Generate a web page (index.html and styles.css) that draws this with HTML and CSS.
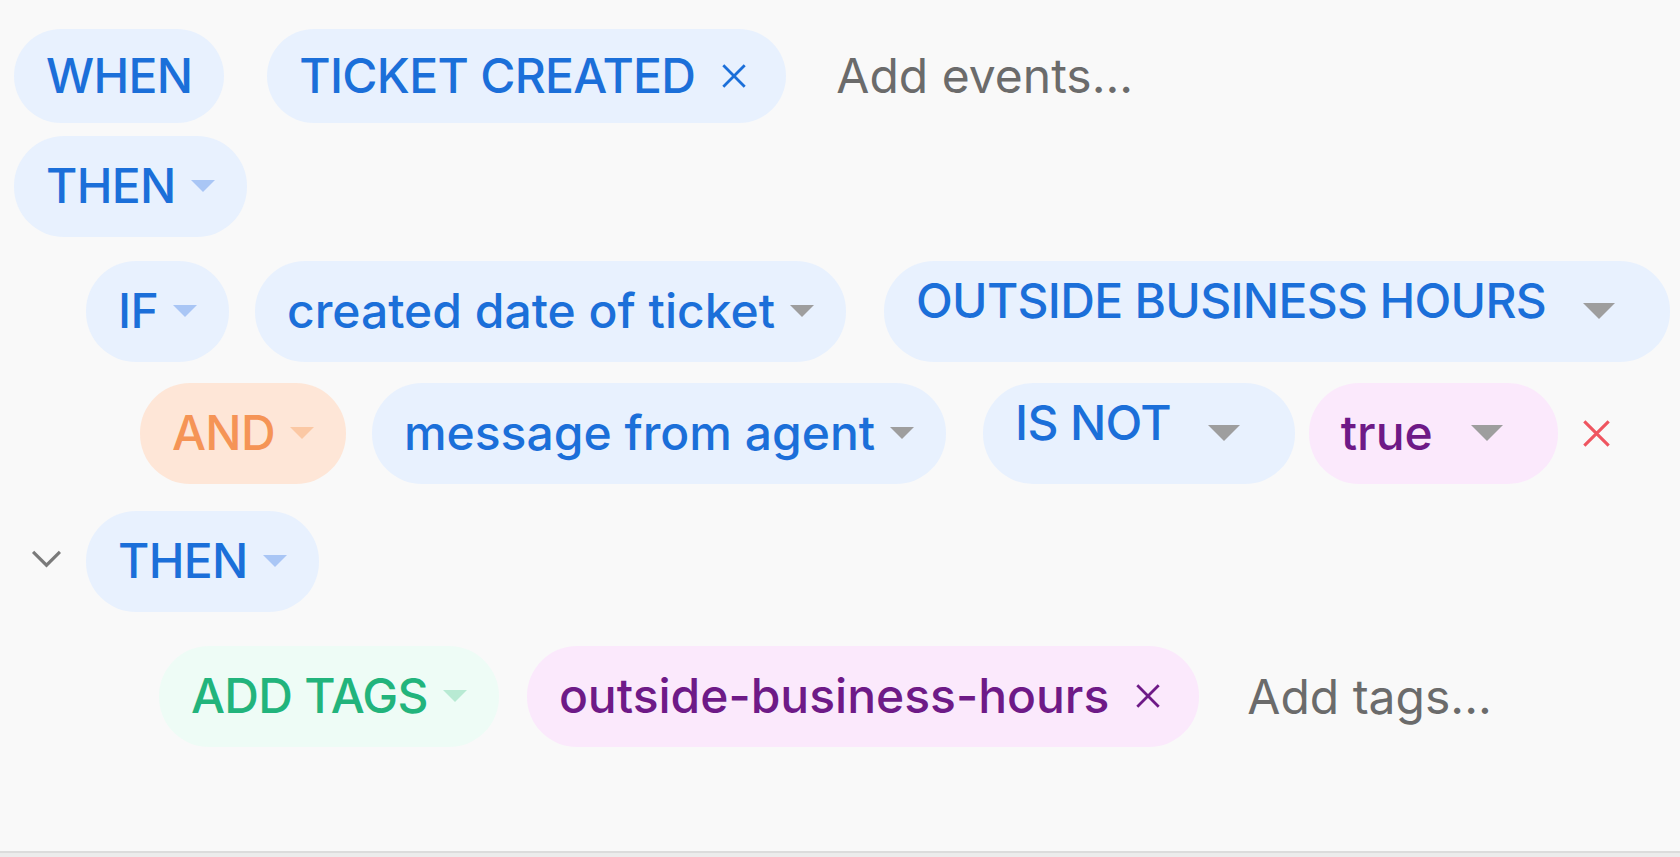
FILE: index.html
```html
<!doctype html>
<html>
    <head>
        <title>Rule editor</title>
        <meta charset="utf-8">
        <meta name="viewport" content="width=device-width">

        <link rel="stylesheet" href="styles.css">
    </head>

    <body>
        <div class="board">
            <div class="row row-when">
                <span class="pill key small">WHEN</span>
                <span class="pill key small event">TICKET CREATED
                    <svg class="x" viewBox="0 0 28 28"><path d="M4 4L24 24M24 4L4 24"/></svg>
                </span>
                <span class="hint">Add events...</span>
            </div>

            <div class="row row-then">
                <span class="pill key">THEN<i class="caret"></i></span>
            </div>

            <div class="row row-if">
                <span class="pill key">IF<i class="caret"></i></span>
                <span class="pill field">created date of ticket<i class="caret"></i></span>
                <span class="pill value op">OUTSIDE BUSINESS HOURS<i class="caret"></i></span>
            </div>

            <div class="row row-and">
                <span class="pill and">AND<i class="caret"></i></span>
                <span class="pill field">message from agent<i class="caret"></i></span>
                <span class="pill value op">IS NOT<i class="caret"></i></span>
                <span class="pill value bool">true<i class="caret"></i></span>
                <svg class="remove" viewBox="0 0 28 28"><path d="M3 3L25 25M25 3L3 25"/></svg>
            </div>

            <div class="row row-then2">
                <svg class="chevron" viewBox="0 0 32 20"><path d="M3 4L16 17L29 4"/></svg>
                <span class="pill key">THEN<i class="caret"></i></span>
            </div>

            <div class="row row-tags">
                <span class="pill action">ADD TAGS<i class="caret"></i></span>
                <span class="pill tag">outside-business-hours
                    <svg class="x" viewBox="0 0 28 28"><path d="M4 4L24 24M24 4L4 24"/></svg>
                </span>
                <span class="hint">Add tags...</span>
            </div>
        </div>
    </body>
</html>
```

FILE: styles.css
```css
html {
    background-color: #ececec;
}
body {
    margin: 0;
    background-color: #f9f9f9;
    font-family: Inter, 'Noto Sans', sans-serif;
    font-size: 48px;
    line-height: 58px;
}
.board {
    box-sizing: border-box;
    height: 853px;
    border-bottom: 2px solid #dcdcdc;
    padding-top: 29px;
}
.row {
    display: flex;
    align-items: center;
}
.row-when {
    padding-left: 14px;
}
.row-then {
    padding-left: 14px;
    margin-top: 13px;
}
.row-if {
    padding-left: 86px;
    margin-top: 24px;
}
.row-and {
    padding-left: 140px;
    margin-top: 21px;
}
.row-then2 {
    padding-left: 30px;
    margin-top: 27px;
}
.row-tags {
    padding-left: 159px;
    margin-top: 34px;
}

.pill {
    display: inline-flex;
    align-items: center;
    padding: 21px 32px 22px 32px;
    border-radius: 50px;
    white-space: nowrap;
    background-color: #e8f1fe;
    color: #1b6fd9;
}
.pill.small {
    padding-top: 18px;
    padding-bottom: 18px;
}
.key, .op, .and, .action {
    font-weight: 500;
    letter-spacing: -0.7px;
}
.field {
    font-weight: 500;
    margin-left: 26px;
}
.value {
    padding-right: 55px;
}
.op {
    margin-left: 38px;
    padding-top: 11px;
    padding-bottom: 32px;
}
.op .caret {
    margin-left: 37px;
    position: relative;
    top: 10px;
}
.row-and .op {
    margin-left: 37px;
}
.bool {
    font-weight: 500;
    margin-left: 14px;
    background-color: #fbe9fc;
    color: #6e1a87;
    padding-left: 32px;
}
.bool .caret {
    margin-left: 38px;
}
.event {
    margin-left: 43px;
    padding-right: 37px;
}

.and {
    background-color: #fee6d7;
    color: #f59456;
}
.and .caret {
    border-top-color: #fbc8a4;
}
.action {
    background-color: #eefcf6;
    color: #22b47c;
}
.action .caret {
    border-top-color: #b8ead3;
}
.tag {
    font-weight: 500;
    margin-left: 28px;
    background-color: #fbe9fc;
    color: #6e1a87;
    padding-right: 36px;
}

.caret {
    display: inline-block;
    width: 0;
    height: 0;
    margin-left: 15px;
    border-left: 12px solid transparent;
    border-right: 12px solid transparent;
    border-top: 12px solid #9e9e9e;
}
.key .caret {
    border-top-color: #a9c6f5;
}
.value .caret {
    border-left-width: 16px;
    border-right-width: 16px;
    border-top-width: 16px;
}

.x {
    width: 30px;
    height: 30px;
    margin-left: 24px;
    fill: none;
    stroke: currentColor;
    stroke-width: 2.6;
}
.remove {
    width: 31px;
    height: 31px;
    margin-left: 23px;
    fill: none;
    stroke: #ef5560;
    stroke-width: 2.8;
}
.chevron {
    width: 33px;
    height: 22px;
    margin-right: 23px;
    margin-bottom: 8px;
    fill: none;
    stroke: #7a7a7a;
    stroke-width: 3;
}
.hint {
    color: #6b6b6b;
    font-weight: 400;
    margin-left: 50px;
}
.row-tags .hint {
    margin-left: 48px;
}
```
